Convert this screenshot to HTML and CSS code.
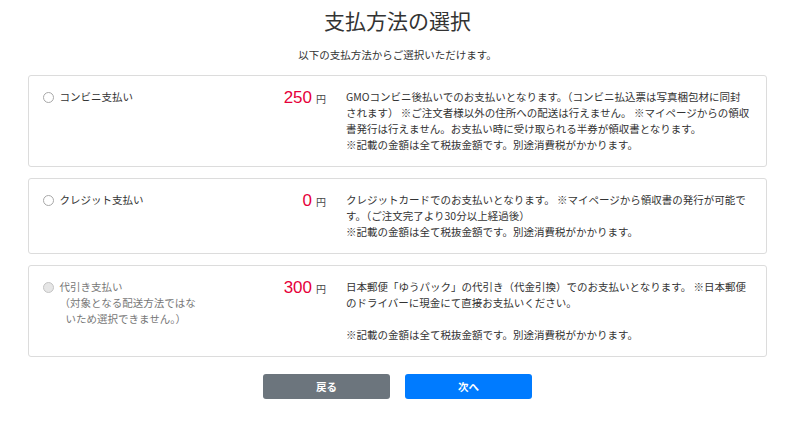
FILE: index.html
```html
<!DOCTYPE html>
<html lang="ja">
<head>
<meta charset="utf-8">
<link rel="stylesheet" href="styles.css">
</head>
<body>
<div class="page">
  <h1 class="title">支払方法の選択</h1>
  <p class="lead">以下の支払方法からご選択いただけます。</p>

  <div class="card">
    <label class="opt"><span class="radio"></span><span>コンビニ支払い</span></label>
    <div class="price"><span class="num">250</span><span class="yen">円</span></div>
    <div class="desc">GMOコンビニ後払いでのお支払いとなります。（コンビニ払込票は写真梱包材に同封<br>されます） ※ご注文者様以外の住所への配送は行えません。 ※マイページからの領収<br>書発行は行えません。お支払い時に受け取られる半券が領収書となります。<br>※記載の金額は全て税抜金額です。別途消費税がかかります。</div>
  </div>

  <div class="card">
    <label class="opt"><span class="radio"></span><span>クレジット支払い</span></label>
    <div class="price"><span class="num">0</span><span class="yen">円</span></div>
    <div class="desc">クレジットカードでのお支払いとなります。 ※マイページから領収書の発行が可能で<br>す。（ご注文完了より30分以上経過後）<br>※記載の金額は全て税抜金額です。別途消費税がかかります。</div>
  </div>

  <div class="card">
    <div class="opt disabled">
      <span class="radio off"></span>
      <span>代引き支払い<span class="note">（対象となる配送方法ではな<br><span class="n2">いため選択できません。）</span></span></span>
    </div>
    <div class="price"><span class="num">300</span><span class="yen">円</span></div>
    <div class="desc">日本郵便「ゆうパック」の代引き（代金引換）でのお支払いとなります。 ※日本郵便<br>のドライバーに現金にて直接お支払いください。<br><br>※記載の金額は全て税抜金額です。別途消費税がかかります。</div>
  </div>

  <div class="actions">
    <button class="btn back">戻る</button>
    <button class="btn next">次へ</button>
  </div>
</div>
</body>
</html>
```

FILE: styles.css
```css
* { box-sizing: border-box; }
html, body {
  margin: 0;
  padding: 0;
  background: #fff;
}
body {
  font-family: "Noto Sans CJK JP", "Noto Sans", sans-serif;
  color: #333;
  font-size: 10.5px;
  line-height: 1.5;
}
.page {
  width: 739px;
  margin: 0 0 0 28px;
  padding-top: 4px;
}
.title {
  margin: 0;
  text-align: center;
  font-size: 21px;
  font-weight: 400;
  line-height: 32px;
  color: #333;
}
.lead {
  margin: 11px 0 0;
  text-align: center;
  font-size: 10.5px;
  line-height: 16px;
}
.card {
  margin-top: 12px;
  border: 1px solid #dcdcdc;
  border-radius: 3px;
  padding: 13px 10px 13px 13.5px;
  display: grid;
  grid-template-columns: 1fr auto 410px;
  column-gap: 20px;
  align-items: start;
}
.card + .card { margin-top: 11px; }
.opt {
  display: flex;
  align-items: flex-start;
  gap: 6px;
  line-height: 16px;
}
.radio {
  flex: none;
  width: 11px;
  height: 11px;
  margin-top: 2.5px;
  border: 1px solid #a8a8a8;
  border-radius: 50%;
  background: #fff;
}
.radio.off {
  background: #e6e6e6;
  border-color: #c4c4c4;
}
.disabled { color: #777; }
.note {
  display: block;
  padding-left: 0;
}
.n2 { padding-left: 6px; }
.price {
  display: flex;
  align-items: baseline;
  gap: 4px;
  line-height: 24px;
  margin-top: -3px;
  margin-right: 0;
}
.num {
  font-family: "Liberation Sans", "Noto Sans", sans-serif;
  font-size: 17px;
  color: #e6003a;
}
.yen {
  font-size: 10px;
  color: #444;
}
.desc {
  line-height: 16px;
  color: #333;
  white-space: nowrap;
}
.actions {
  display: flex;
  justify-content: center;
  gap: 15px;
  margin-top: 17px;
}
.btn {
  width: 127px;
  height: 25px;
  border: none;
  border-radius: 3px;
  color: #fff;
  font-family: "Noto Sans CJK JP", "Noto Sans", sans-serif;
  font-size: 10.5px;
  font-weight: 700;
}
.back { background: #6c757d; }
.next { background: #007bff; }
```
